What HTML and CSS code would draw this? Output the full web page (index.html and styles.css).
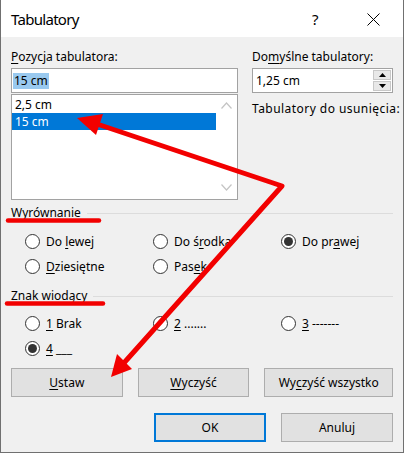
FILE: index.html
```html
<!DOCTYPE html>
<html lang="pl">
<head>
<meta charset="utf-8">
<title>Tabulatory</title>
<link rel="stylesheet" href="styles.css">
</head>
<body>
<div class="dialog">
  <div class="titlebar">
    <span class="title">Tabulatory</span>
    <span class="help">?</span>
    <span class="close">
      <svg width="13" height="13" viewBox="0 0 13 13"><path d="M0.5 0.5 L12.5 12.5 M12.5 0.5 L0.5 12.5" stroke="#000" stroke-width="1" fill="none"/></svg>
    </span>
  </div>
  <div class="content">
    <div class="top">
      <div class="col">
        <div class="lbl"><u>P</u>ozycja tabulatora:</div>
        <div class="input"><span class="seltext">15 cm</span></div>
        <div class="list">
          <div class="items">
            <div class="item">2,5 cm</div>
            <div class="item selected">15 cm</div>
          </div>
          <div class="scroll">
            <svg width="11" height="7" viewBox="0 0 11 7"><path d="M0.5 6.5 L5.5 1 L10.5 6.5" stroke="#c4c4c4" stroke-width="1.2" fill="none"/></svg>
            <svg width="11" height="7" viewBox="0 0 11 7"><path d="M0.5 0.5 L5.5 6 L10.5 0.5" stroke="#c4c4c4" stroke-width="1.2" fill="none"/></svg>
          </div>
        </div>
      </div>
      <div class="col">
        <div class="lbl">Do<u>m</u>yślne tabulatory:</div>
        <div class="input spin">
          <span class="val">1,25 cm</span>
          <div class="spinbtns">
            <div class="sb"><svg width="7" height="4" viewBox="0 0 7 4"><path d="M0 4 L3.5 0 L7 4 Z" fill="#000"/></svg></div>
            <div class="sb"><svg width="7" height="4" viewBox="0 0 7 4"><path d="M0 0 L3.5 4 L7 0 Z" fill="#000"/></svg></div>
          </div>
        </div>
        <div class="lbl remove">Tabulatory do usunięcia:</div>
      </div>
    </div>

    <div class="group g-align">
      <div class="ghead"><span>Wyrównanie</span><div class="gline"></div></div>
      <div class="radios">
        <div class="radio"><span class="circle"></span><span>Do <u>l</u>ewej</span></div>
        <div class="radio"><span class="circle"></span><span>Do ś<u>r</u>odka</span></div>
        <div class="radio"><span class="circle checked"></span><span>Do pr<u>a</u>wej</span></div>
        <div class="radio"><span class="circle"></span><span><u>D</u>ziesiętne</span></div>
        <div class="radio"><span class="circle"></span><span>Pas<u>e</u>k</span></div>
      </div>
    </div>

    <div class="group g-leader">
      <div class="ghead"><span>Znak wiodący</span><div class="gline"></div></div>
      <div class="radios">
        <div class="radio"><span class="circle"></span><span><u>1</u> Brak</span></div>
        <div class="radio"><span class="circle"></span><span><u>2</u> .......</span></div>
        <div class="radio"><span class="circle"></span><span><u>3</u> -------</span></div>
        <div class="radio"><span class="circle checked"></span><span><u>4</u> ___</span></div>
      </div>
    </div>

    <div class="btnrow">
      <button class="btn"><u>U</u>staw</button>
      <button class="btn"><u>W</u>yczyść</button>
      <button class="btn wide">Wy<u>c</u>zyść wszystko</button>
    </div>
    <div class="btnrow end">
      <button class="btn default">OK</button>
      <button class="btn">Anuluj</button>
    </div>
  </div>

  <svg class="annot" width="404" height="453" viewBox="0 0 404 453">
    <line x1="8" y1="220.5" x2="99" y2="220.5" stroke="#f20000" stroke-width="4.5" stroke-linecap="round"/>
    <line x1="7" y1="303.5" x2="103" y2="303.5" stroke="#f20000" stroke-width="4.5" stroke-linecap="round"/>
    <polyline points="97,124 282,186 123,364" stroke="#f20000" stroke-width="5" fill="none" stroke-linejoin="round" stroke-linecap="round"/>
    <polygon points="77,118 103,114 96,135" fill="#f20000"/>
    <polygon points="111,377 117,354 132,369" fill="#f20000"/>
  </svg>
</div>
</body>
</html>
```

FILE: styles.css
```css
* { box-sizing: border-box; }
html, body { margin: 0; padding: 0; }
body {
  width: 404px;
  height: 453px;
  overflow: hidden;
  font-family: "Noto Sans", "Open Sans", sans-serif;
  font-size: 12px;
  color: #000;
  background: #fff;
}
u { text-decoration: underline; text-underline-offset: 2px; }

.dialog {
  position: relative;
  width: 404px;
  height: 453px;
  border: 1px solid #707070;
  border-top: none;
  background: #f0f0f0;
  display: flex;
  flex-direction: column;
}

.titlebar {
  height: 37px;
  background: #fff;
  display: flex;
  align-items: center;
  flex: none;
}
.title {
  margin-left: 10px;
  font-size: 15px;
  line-height: 20px;
  letter-spacing: -0.7px;
}
.help {
  margin-left: auto;
  font-size: 15px;
  line-height: 20px;
  width: 55px;
}
.close {
  width: 36px;
  display: flex;
  align-items: center;
  margin-top: 2px;
}

.content {
  padding: 12px 10px 0 10px;
}

.top {
  display: grid;
  grid-template-columns: 227px 141px;
  column-gap: 14px;
}
.col { display: flex; flex-direction: column; }
.lbl { line-height: 16px; white-space: nowrap; }

.input {
  margin-top: 3px;
  height: 25px;
  border: 1px solid #a2a2a2;
  background: #fff;
  display: flex;
  align-items: center;
  padding-left: 1px;
}
.seltext {
  background: #99c9ef;
  line-height: 16px;
  padding: 0 1px;
}

.list {
  margin-top: 1px;
  height: 106px;
  border: 1px solid #a2a2a2;
  background: #fff;
  display: flex;
}
.items {
  flex: 1;
  padding-top: 1px;
}
.item {
  height: 17px;
  line-height: 17px;
  padding-left: 3px;
}
.item.selected {
  background: #0078d7;
  color: #fff;
}
.scroll {
  width: 21px;
  display: flex;
  flex-direction: column;
  justify-content: space-between;
  align-items: center;
  padding: 7px 0 8px;
}

.spin { justify-content: space-between; padding-left: 3px; padding-right: 1px; }
.spinbtns {
  display: flex;
  flex-direction: column;
  gap: 1px;
  width: 18px;
}
.sb {
  height: 10px;
  background: #e8e8e8;
  border: 1px solid #c8c8c8;
  display: flex;
  align-items: center;
  justify-content: center;
}
.lbl.remove { margin-top: 8px; letter-spacing: 0.45px; }

.group { margin-top: 5px; }
.g-leader { margin-top: 9px; }
.ghead {
  display: flex;
  align-items: center;
  line-height: 16px;
  gap: 6px;
}
.gline {
  flex: 1;
  height: 1px;
  background: #dcdcdc;
}
.radios {
  margin-top: 8px;
  padding-left: 14px;
  display: grid;
  grid-template-columns: 128px 128px 1fr;
}
.g-leader .radios { margin-top: 7px; }
.radio {
  height: 25px;
  display: flex;
  align-items: center;
  gap: 6px;
}
.circle {
  width: 15px;
  height: 15px;
  border: 1px solid #333;
  border-radius: 50%;
  background: #fff;
  display: flex;
  align-items: center;
  justify-content: center;
  flex: none;
}
.circle.checked::after {
  content: "";
  width: 9px;
  height: 9px;
  border-radius: 50%;
  background: #333;
}

.btnrow {
  display: flex;
  gap: 15px;
  margin-top: 7px;
  padding-left: 0;
}
.btnrow.end { justify-content: flex-end; margin-top: 16px; }
.btn {
  width: 112px;
  height: 29px;
  background: #e1e1e1;
  border: 1px solid #adadad;
  font: inherit;
  color: #000;
  padding: 0;
}
.btn.wide { width: 129px; }
.btn.default { border: 2px solid #0078d7; }

.annot {
  position: absolute;
  top: 0;
  left: -1px;
  pointer-events: none;
}
```
